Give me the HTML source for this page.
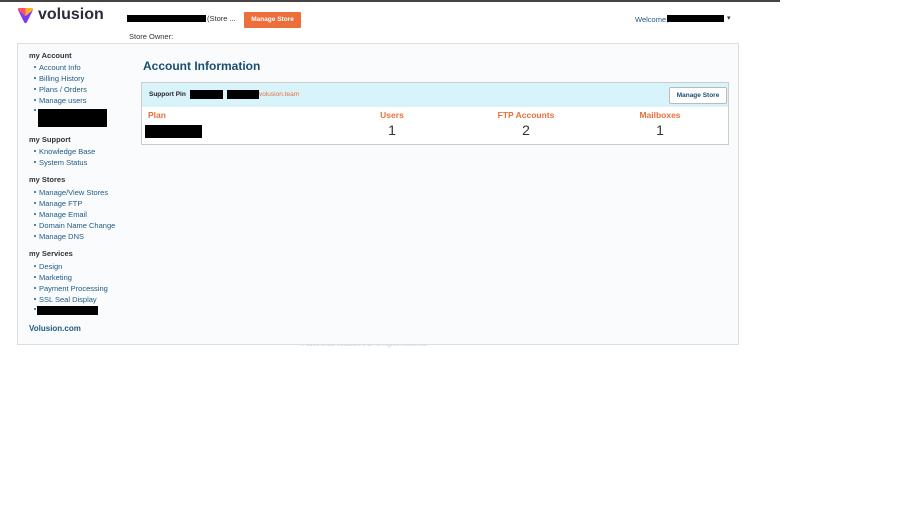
<!DOCTYPE html>
<html><head><meta charset="utf-8"><style>
*{margin:0;padding:0;box-sizing:border-box}
body{width:921px;height:518px;background:#fff;font-family:"Liberation Sans",Arial,sans-serif;position:relative;overflow:hidden}
.a{position:absolute;white-space:nowrap}
.blk{position:absolute;background:#000}
.nav{font-size:7.5px;color:#1f5a86}
.h{font-size:7.5px;font-weight:bold;color:#333}
.dot{position:absolute;width:2px;height:2px;background:#1f5a86;border-radius:1px}
.or{color:#e8703a;font-size:8.5px;font-weight:bold}
.num{font-size:14px;color:#333}
</style></head><body>
<div class="a" style="left:0;top:0;width:780px;height:2px;background:#444"></div>
<svg class="a" style="left:17px;top:8px" width="17" height="16" viewBox="0 0 17 16">
<path d="M1 2 Q0 0 3 0 L8.5 0 L8.5 8 Z" fill="#ff4d6d"/>
<path d="M8.5 0 L14 0 Q17 0 16 2 L8.5 8 Z" fill="#ffb020"/>
<path d="M1 2 L8.5 8 L16 2 L10 14 Q8.5 16.5 7 14 Z" fill="#7b3cf0"/>
</svg>
<div class="a" style="left:38px;top:6px;font-size:16px;color:#2b2b3a;font-weight:bold">volusion</div>
<div class="blk" style="left:127px;top:15px;width:79px;height:7px"></div>
<div class="a" style="left:207px;top:14px;font-size:7.5px;color:#333">(Store ...</div>
<div class="a" style="left:244px;top:12px;width:57px;height:16px;background:#ec6f3b;color:#fff;font-size:6.5px;font-weight:bold;text-align:center;line-height:16px;border-radius:1px">Manage Store</div>
<div class="a" style="left:129px;top:32px;font-size:7.5px;color:#333">Store Owner:</div>
<div class="a" style="left:635px;top:15px;font-size:7.5px;color:#1f5a86">Welcome,</div>
<div class="blk" style="left:667px;top:15px;width:57px;height:7px"></div>
<div class="a" style="left:727px;top:14px;font-size:7px;color:#333">▾</div>

<div class="a" style="left:300px;top:342px;font-size:6px;color:#ccc">© 1999-2022 Volusion, Inc. All Rights Reserved</div>
<div class="a" style="left:17px;top:43px;width:722px;height:302px;background:#fafbfc;border:1px solid #ddd"></div>

<div class="a h" style="left:29px;top:51px">my Account</div>
<div class="a nav" style="left:39px;top:63px">Account Info</div>
<div class="a nav" style="left:39px;top:74px">Billing History</div>
<div class="a nav" style="left:39px;top:85px">Plans / Orders</div>
<div class="a nav" style="left:39px;top:96px">Manage users</div>
<div class="blk" style="left:38px;top:109px;width:69px;height:18px"></div>
<div class="a h" style="left:29px;top:135px">my Support</div>
<div class="a nav" style="left:39px;top:147px">Knowledge Base</div>
<div class="a nav" style="left:39px;top:158px">System Status</div>
<div class="a h" style="left:29px;top:175px">my Stores</div>
<div class="a nav" style="left:39px;top:188px">Manage/View Stores</div>
<div class="a nav" style="left:39px;top:199px">Manage FTP</div>
<div class="a nav" style="left:39px;top:210px">Manage Email</div>
<div class="a nav" style="left:39px;top:221px">Domain Name Change</div>
<div class="a nav" style="left:39px;top:232px">Manage DNS</div>
<div class="a h" style="left:29px;top:249px">my Services</div>
<div class="a nav" style="left:39px;top:262px">Design</div>
<div class="a nav" style="left:39px;top:273px">Marketing</div>
<div class="a nav" style="left:39px;top:284px">Payment Processing</div>
<div class="a nav" style="left:39px;top:295px">SSL Seal Display</div>
<div class="blk" style="left:37px;top:306px;width:61px;height:9px"></div>
<div class="a" style="left:29px;top:324px;font-size:8px;font-weight:bold;color:#1f5a86">Volusion.com</div>
<div class="dot" style="left:34px;top:66px"></div><div class="dot" style="left:34px;top:77px"></div><div class="dot" style="left:34px;top:88px"></div><div class="dot" style="left:34px;top:99px"></div><div class="dot" style="left:34px;top:109px"></div>
<div class="dot" style="left:34px;top:150px"></div><div class="dot" style="left:34px;top:161px"></div>
<div class="dot" style="left:34px;top:191px"></div><div class="dot" style="left:34px;top:202px"></div><div class="dot" style="left:34px;top:213px"></div><div class="dot" style="left:34px;top:224px"></div><div class="dot" style="left:34px;top:235px"></div>
<div class="dot" style="left:34px;top:265px"></div><div class="dot" style="left:34px;top:276px"></div><div class="dot" style="left:34px;top:287px"></div><div class="dot" style="left:34px;top:298px"></div><div class="dot" style="left:34px;top:308px"></div>

<div class="a" style="left:143px;top:59px;font-size:12px;font-weight:bold;color:#1b4d72">Account Information</div>
<div class="a" style="left:141px;top:82px;width:588px;height:63px;background:#fff;border:1px solid #ccc"></div>
<div class="a" style="left:142px;top:83px;width:586px;height:24px;background:#d9f3fa"></div>
<div class="a" style="left:149px;top:91px;font-size:6.5px;font-weight:bold;color:#222">Support Pin</div>
<div class="blk" style="left:190px;top:90px;width:33px;height:9px"></div>
<div class="blk" style="left:227px;top:90px;width:32px;height:9px"></div>
<div class="a" style="left:259px;top:91px;font-size:6.5px;color:#e8703a">volusion.team</div>
<div class="a" style="left:669px;top:87px;width:58px;height:17px;background:#fff;border:1px solid #bbb;border-radius:2px;font-size:6.5px;font-weight:bold;color:#1b4d72;text-align:center;line-height:15px">Manage Store</div>
<div class="a or" style="left:148px;top:110px">Plan</div>
<div class="a or" style="left:352px;top:110px;width:80px;text-align:center">Users</div>
<div class="a or" style="left:476px;top:110px;width:100px;text-align:center">FTP Accounts</div>
<div class="a or" style="left:610px;top:110px;width:100px;text-align:center">Mailboxes</div>
<div class="blk" style="left:145px;top:125px;width:57px;height:13px"></div>
<div class="a num" style="left:352px;top:122px;width:80px;text-align:center">1</div>
<div class="a num" style="left:476px;top:122px;width:100px;text-align:center">2</div>
<div class="a num" style="left:610px;top:122px;width:100px;text-align:center">1</div>
</body></html>
